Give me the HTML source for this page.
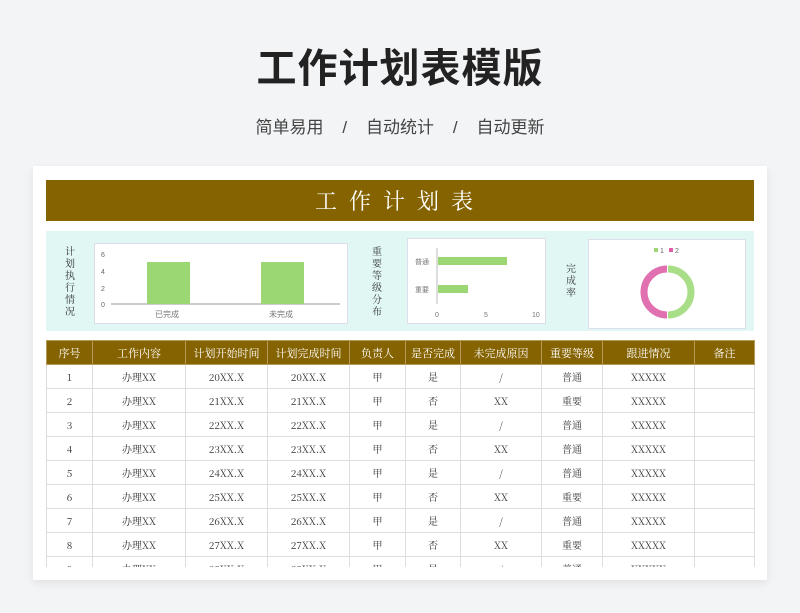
<!DOCTYPE html>
<html><head><meta charset="utf-8"><style>
*{margin:0;padding:0;box-sizing:border-box}
body{width:800px;height:613px;background:#f3f4f6;font-family:"Liberation Sans","Noto Sans CJK SC",sans-serif;position:relative;overflow:hidden}
.t{position:absolute;left:0;width:800px;text-align:center;top:36px;font-size:40px;font-weight:bold;color:#222;letter-spacing:1px}
.s{position:absolute;left:0;width:800px;text-align:center;top:113px;font-size:17px;color:#444;word-spacing:0}
.card{position:absolute;left:33px;top:166px;width:734px;height:414px;background:#fff;box-shadow:0 3px 8px rgba(0,0,0,.08);overflow:hidden}
.bar{position:absolute;left:13px;top:14px;width:708px;height:41px;background:#856300;color:#fff;font-size:22px;text-align:center;line-height:41px;letter-spacing:12px;font-family:"Noto Serif CJK SC",serif}
.ch{position:absolute;left:13px;top:65px;width:708px;height:100px;background:#e0f7f4}
.box{position:absolute;background:#fff;border:1px solid #dde}
.vt{position:absolute;font-size:10px;line-height:12px;width:12px;color:#333;font-family:"Noto Serif CJK SC",serif}
table{position:absolute;left:13px;top:174px;border-collapse:collapse;font-family:"Noto Serif CJK SC",serif;font-size:10px;color:#333;table-layout:fixed}
td,th{border:1px solid #ddd;height:24px;text-align:center;padding:0}
th{background:#856300;color:#fff;font-weight:normal;border-color:#b59a5a;font-size:11px}
</style></head><body>
<div class="t">工作计划表模版</div>
<div class="s">简单易用 &nbsp;&nbsp;&nbsp;/&nbsp;&nbsp;&nbsp; 自动统计 &nbsp;&nbsp;&nbsp;/&nbsp;&nbsp;&nbsp; 自动更新</div>
<div class="card">
<div class="bar">工作计划表</div>
<div class="ch">
<div class="vt" style="left:19px;top:14px">计划执行情况</div>
<div class="box" style="left:48px;top:12px;width:254px;height:81px">
<svg width="254" height="81" style="position:absolute;left:0;top:0">
<g font-size="7" fill="#666"><text x="6" y="13">6</text><text x="6" y="30">4</text><text x="6" y="47">2</text><text x="6" y="63">0</text></g>
<line x1="16" y1="60" x2="245" y2="60" stroke="#ccc" stroke-width="2"/>
<rect x="52" y="18" width="43" height="42" fill="#9bd874"/>
<rect x="166" y="18" width="43" height="42" fill="#9bd874"/>
<g font-size="8" fill="#777"><text x="60" y="73">已完成</text><text x="174" y="73">未完成</text></g>
</svg></div>
<div class="vt" style="left:326px;top:14px">重要等级分布</div>
<div class="box" style="left:361px;top:7px;width:139px;height:86px">
<svg width="139" height="86" style="position:absolute;left:0;top:0">
<line x1="29" y1="9" x2="29" y2="65" stroke="#bbb"/>
<rect x="30" y="18" width="69" height="8" fill="#9bd874"/><rect x="30" y="46" width="30" height="8" fill="#9bd874"/>
<g font-size="7" fill="#777"><text x="7" y="25">普通</text><text x="7" y="53">重要</text><text x="27" y="78">0</text><text x="76" y="78">5</text><text x="124" y="78">10</text></g>
</svg></div>
<div class="vt" style="left:520px;top:31px">完成率</div>
<div class="box" style="left:542px;top:8px;width:158px;height:90px">
<svg width="158" height="90" style="position:absolute;left:0;top:0">
<rect x="65" y="8" width="4" height="4" fill="#9bd874"/><text x="71" y="13" font-size="7" fill="#666">1</text>
<rect x="80" y="8" width="4" height="4" fill="#e060a8"/><text x="86" y="13" font-size="7" fill="#666">2</text>
<path d="M79 29 A23 23 0 0 1 79 75" fill="none" stroke="#a9de88" stroke-width="7"/>
<path d="M78 75 A23 23 0 0 1 78 29" fill="none" stroke="#e070b0" stroke-width="7"/>
</svg></div>
</div>
<table>
<colgroup><col style="width:46px"><col style="width:93px"><col style="width:82px"><col style="width:82px"><col style="width:56px"><col style="width:55px"><col style="width:81px"><col style="width:61px"><col style="width:92px"><col style="width:60px"></colgroup>
<tr><th>序号</th><th>工作内容</th><th>计划开始时间</th><th>计划完成时间</th><th>负责人</th><th>是否完成</th><th>未完成原因</th><th>重要等级</th><th>跟进情况</th><th>备注</th></tr>
<tr><td>1</td><td>办理XX</td><td>20XX.X</td><td>20XX.X</td><td>甲</td><td>是</td><td>/</td><td>普通</td><td>XXXXX</td><td></td></tr>
<tr><td>2</td><td>办理XX</td><td>21XX.X</td><td>21XX.X</td><td>甲</td><td>否</td><td>XX</td><td>重要</td><td>XXXXX</td><td></td></tr>
<tr><td>3</td><td>办理XX</td><td>22XX.X</td><td>22XX.X</td><td>甲</td><td>是</td><td>/</td><td>普通</td><td>XXXXX</td><td></td></tr>
<tr><td>4</td><td>办理XX</td><td>23XX.X</td><td>23XX.X</td><td>甲</td><td>否</td><td>XX</td><td>普通</td><td>XXXXX</td><td></td></tr>
<tr><td>5</td><td>办理XX</td><td>24XX.X</td><td>24XX.X</td><td>甲</td><td>是</td><td>/</td><td>普通</td><td>XXXXX</td><td></td></tr>
<tr><td>6</td><td>办理XX</td><td>25XX.X</td><td>25XX.X</td><td>甲</td><td>否</td><td>XX</td><td>重要</td><td>XXXXX</td><td></td></tr>
<tr><td>7</td><td>办理XX</td><td>26XX.X</td><td>26XX.X</td><td>甲</td><td>是</td><td>/</td><td>普通</td><td>XXXXX</td><td></td></tr>
<tr><td>8</td><td>办理XX</td><td>27XX.X</td><td>27XX.X</td><td>甲</td><td>否</td><td>XX</td><td>重要</td><td>XXXXX</td><td></td></tr>
<tr><td>9</td><td>办理XX</td><td>28XX.X</td><td>28XX.X</td><td>甲</td><td>是</td><td>/</td><td>普通</td><td>XXXXX</td><td></td></tr>
</table>
<div style="position:absolute;left:0;top:401px;width:734px;height:13px;background:#fff"></div>
</div>
</body></html>
